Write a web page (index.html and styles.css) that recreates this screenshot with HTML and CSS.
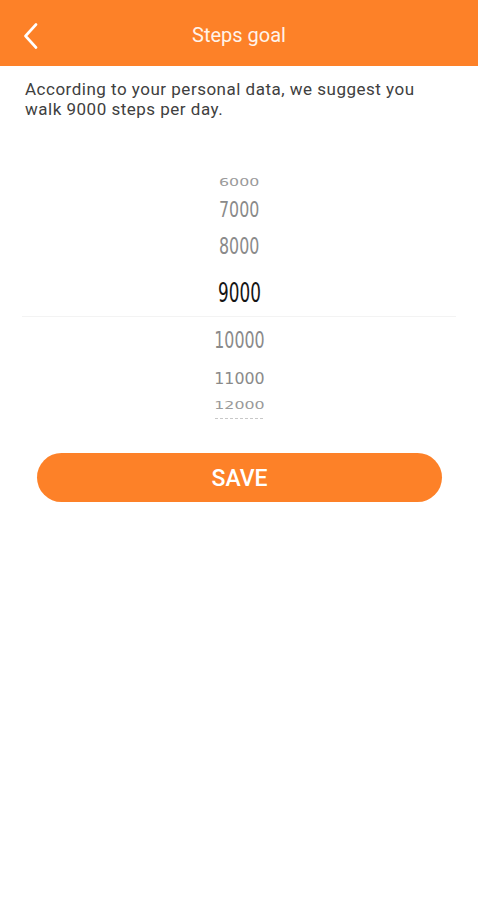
FILE: index.html
```html
<!DOCTYPE html>
<html lang="en">
<head>
  <meta charset="UTF-8">
  <meta name="viewport" content="width=device-width, initial-scale=1.0">
  <title>Steps goal</title>
  <link rel="stylesheet" href="styles.css">
</head>
<body>
  <header class="topbar">
    <a href="#" class="back" aria-label="Back">
      <svg width="18" height="26" viewBox="0 0 18 26">
        <path d="M14 1.5 L3.5 13 L14 24.5" fill="none" stroke="#fff" stroke-width="2.6" stroke-linecap="round" stroke-linejoin="round"/>
      </svg>
    </a>
    <h1 class="title">Steps goal</h1>
  </header>

  <p class="hint">According to your personal data, we suggest you walk 9000 steps per day.</p>

  <div class="picker">
    <div class="row r-far"><span>6000</span></div>
    <div class="row r-near-top"><span>7000</span></div>
    <div class="row r-close"><span>8000</span></div>
    <div class="row r-selected"><span>9000</span></div>
    <div class="row r-close"><span>10000</span></div>
    <div class="row r-near-bottom"><span>11000</span></div>
    <div class="row r-far-bottom"><span>12000</span></div>
    <div class="row r-edge"><i class="edge-dots"></i></div>
  </div>

  <div class="actions">
    <button class="save">SAVE</button>
  </div>
</body>
</html>
```

FILE: styles.css
```css
body {
  margin: 0;
  font-family: Roboto, "Liberation Sans", sans-serif;
  background-color: #fff;
  color: #444;
}
.topbar {
  position: relative;
  height: 66px;
  background-color: #fd8128;
  display: flex;
  align-items: center;
  justify-content: center;
}
.back {
  position: absolute;
  left: 22px;
  top: 23px;
  display: block;
  line-height: 0;
}
.title {
  margin: 3px 0 0;
  font-size: 20px;
  font-weight: 400;
  color: #fff3ea;
}
.hint {
  margin: 13px 25px 0;
  max-width: 418px;
  font-size: 17px;
  line-height: 20px;
  letter-spacing: 0.5px;
  color: #404040;
}
.picker {
  margin-top: 50px;
  height: 250px;
  overflow: hidden;
  display: flex;
  flex-direction: column;
}
.row {
  flex: none;
  display: flex;
  align-items: center;
  justify-content: center;
  font-family: "DejaVu Sans Condensed", "Liberation Sans", sans-serif;
  font-size: 22px;
  color: #8a8a8a;
}
.row span {
  display: inline-block;
  line-height: 1;
}
.r-far {
  height: 27px;
  color: #9a9a9a;
}
.r-far span {
  transform: scale(0.8, 0.45);
}
.r-near-top {
  height: 27px;
}
.r-near-top span {
  transform: scale(0.8, 0.95);
}
.r-close {
  height: 47px;
}
.r-close span {
  transform: scale(0.8, 1.05);
}
.r-selected {
  height: 47px;
  color: #151515;
  font-size: 24px;
  border-bottom: 1px solid #f3f3f3;
  margin: 0 22px;
  box-sizing: border-box;
}
.r-selected span {
  transform: scale(0.78, 1.14);
}
.r-near-bottom {
  height: 30px;
}
.r-near-bottom span {
  transform: scale(0.8, 0.76);
}
.r-far-bottom {
  height: 23px;
  color: #9a9a9a;
}
.r-far-bottom span {
  transform: scale(0.8, 0.45);
}
.r-edge {
  height: 14px;
  align-items: flex-start;
  padding-top: 1px;
}
.edge-dots {
  display: block;
  width: 48px;
  border-top: 1px dashed #c8c8c8;
}
.actions {
  padding: 34px 36px 0 37px;
}
.save {
  display: block;
  width: 100%;
  height: 49px;
  padding-top: 3px;
  border: none;
  border-radius: 25px;
  background-color: #fd8128;
  color: #fff;
  font-family: Roboto, "Liberation Sans", sans-serif;
  font-size: 23px;
  font-weight: 500;
  cursor: pointer;
}
```
